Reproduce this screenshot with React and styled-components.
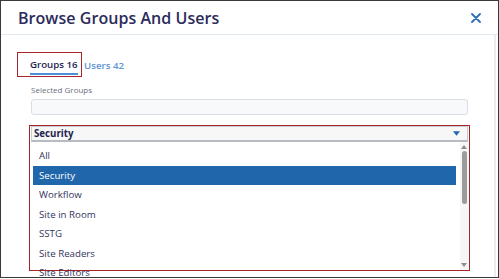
import React from 'react';
import styled, { createGlobalStyle } from 'styled-components';

const GlobalStyle = createGlobalStyle`
    html, body {
        margin: 0;
        padding: 0;
        background: #fff;
    }
    body {
        font-family: "Open Sans", "Liberation Sans", sans-serif;
    }
`

const FRAME = styled.div`
    width: 499px;
    height: 278px;
    box-sizing: border-box;
    border: 1px solid #3a3a3a;
    background: #fff;
    overflow: hidden;
    display: flex;
    flex-direction: column;
`

const HEADER = styled.div`
    height: 34px;
    flex-shrink: 0;
    box-sizing: border-box;
    display: flex;
    align-items: center;
    justify-content: space-between;
    padding: 0 15px 0 17px;
    border-bottom: 1.5px solid #e2e8f0;
`

const TITLE = styled.h1`
    margin: 0;
    font-size: 16px;
    font-weight: 600;
    color: #2b2b5c;
    letter-spacing: 0.05px;
`

const CLOSE = styled.button`
    border: none;
    background: none;
    padding: 0;
    width: 14px;
    height: 14px;
    display: flex;
    align-items: center;
    justify-content: center;
    cursor: pointer;
`

const BODY = styled.div`
    flex: 1;
    display: flex;
    flex-direction: column;
    padding: 17px 0 0 16px;
    margin-right: 2px;
    border-right: 2px solid #e9edf2;
`

const TABS = styled.div`
    display: flex;
    align-items: flex-end;
    gap: 2px;
`

const ANNOTATE = styled.div`
    border: 1.5px solid #a8242b;
    box-sizing: border-box;
`

const TAB_MARK = styled(ANNOTATE)`
    width: 65px;
    height: 25px;
    padding-left: 12px;
    display: flex;
    align-items: flex-end;
`

const TAB = styled.div`
    font-size: 9.7px;
    font-weight: 600;
    color: ${p => (p.$active ? '#24244f' : '#5f95d3')};
    padding-bottom: ${p => (p.$active ? '1px' : '4px')};
    border-bottom: ${p => (p.$active ? '2px solid #4b8fd9' : 'none')};
    margin-bottom: ${p => (p.$active ? '1px' : '0')};
    line-height: 14px;
    white-space: nowrap;
`

const LABEL = styled.div`
    margin: 8px 0 0 14px;
    font-size: 8px;
    color: #6a6f7a;
    line-height: 10px;
`

const INPUT = styled.div`
    margin: 4px 0 0 14px;
    width: 437px;
    height: 16px;
    box-sizing: border-box;
    border: 1px solid #dadee4;
    border-radius: 3px;
    background: #f8f9fa;
`

const DROP_MARK = styled(ANNOTATE)`
    margin: 10px 0 0 12px;
    width: 441px;
    height: 146px;
    padding: 0 1px;
    display: flex;
    flex-direction: column;
`

const SELECT = styled.div`
    height: 16px;
    flex-shrink: 0;
    box-sizing: border-box;
    display: flex;
    align-items: center;
    justify-content: space-between;
    padding: 0 7px 0 2px;
    background: #f7f7f8;
    border: 1px solid #c9ccd2;
    border-bottom: 2px solid #b6bac1;
    font-size: 9.7px;
    font-weight: 700;
    color: #24244f;
`

const LIST_WRAP = styled.div`
    display: flex;
    flex: 1;
    min-height: 0;
`

const LIST = styled.div`
    flex: 1;
    padding: 4px 4px 0 2px;
    display: flex;
    flex-direction: column;
`

const ITEM = styled.div`
    height: 19.5px;
    flex-shrink: 0;
    display: flex;
    align-items: center;
    padding-left: 6px;
    font-size: 9.7px;
    color: ${p => (p.$selected ? '#fff' : '#33335c')};
    background: ${p => (p.$selected ? '#1f67aa' : 'transparent')};
`

const SCROLLBAR = styled.div`
    width: 8px;
    flex-shrink: 0;
    background: #f6f6f6;
    display: flex;
    flex-direction: column;
    align-items: center;
    justify-content: space-between;
    padding: 3px 0;
    box-sizing: border-box;
`

const THUMB = styled.div`
    width: 5px;
    height: 53px;
    border-radius: 3px;
    background: #9c9c9c;
    margin-top: 2px;
`

const SCROLL_BODY = styled.div`
    flex: 1;
    display: flex;
    flex-direction: column;
    align-items: center;
`

const groups = ['All', 'Security', 'Workflow', 'Site in Room', 'SSTG', 'Site Readers', 'Site Editors'];

const Arrow = ({ up, color = '#8d8d8d', size = 5 }) => (
    <svg width={size + 1} height={size - 1} viewBox="0 0 6 4">
        <path d={up ? 'M0 4 L3 0 L6 4 Z' : 'M0 0 L6 0 L3 4 Z'} fill={color} />
    </svg>
)

const App = () => {
    return (
        <>
            <GlobalStyle />
            <FRAME>
                <HEADER>
                    <TITLE>Browse Groups And Users</TITLE>
                    <CLOSE aria-label="Close">
                        <svg width="10" height="10" viewBox="0 0 10 10">
                            <path d="M1 1 L9 9 M9 1 L1 9" stroke="#2f6db8" strokeWidth="1.8" strokeLinecap="round" />
                        </svg>
                    </CLOSE>
                </HEADER>

                <BODY>
                    <TABS>
                        <TAB_MARK>
                            <TAB $active>Groups 16</TAB>
                        </TAB_MARK>
                        <TAB>Users 42</TAB>
                    </TABS>

                    <LABEL>Selected Groups</LABEL>
                    <INPUT />

                    <DROP_MARK>
                        <SELECT>
                            <span>Security</span>
                            <Arrow color="#2166b0" size={6} />
                        </SELECT>
                        <LIST_WRAP>
                            <LIST>
                                {groups.map(g => (
                                    <ITEM key={g} $selected={g === 'Security'}>{g}</ITEM>
                                ))}
                            </LIST>
                            <SCROLLBAR>
                                <SCROLL_BODY>
                                    <Arrow up />
                                    <THUMB />
                                </SCROLL_BODY>
                                <Arrow />
                            </SCROLLBAR>
                        </LIST_WRAP>
                    </DROP_MARK>
                </BODY>
            </FRAME>
        </>
    )
}

export default App;
